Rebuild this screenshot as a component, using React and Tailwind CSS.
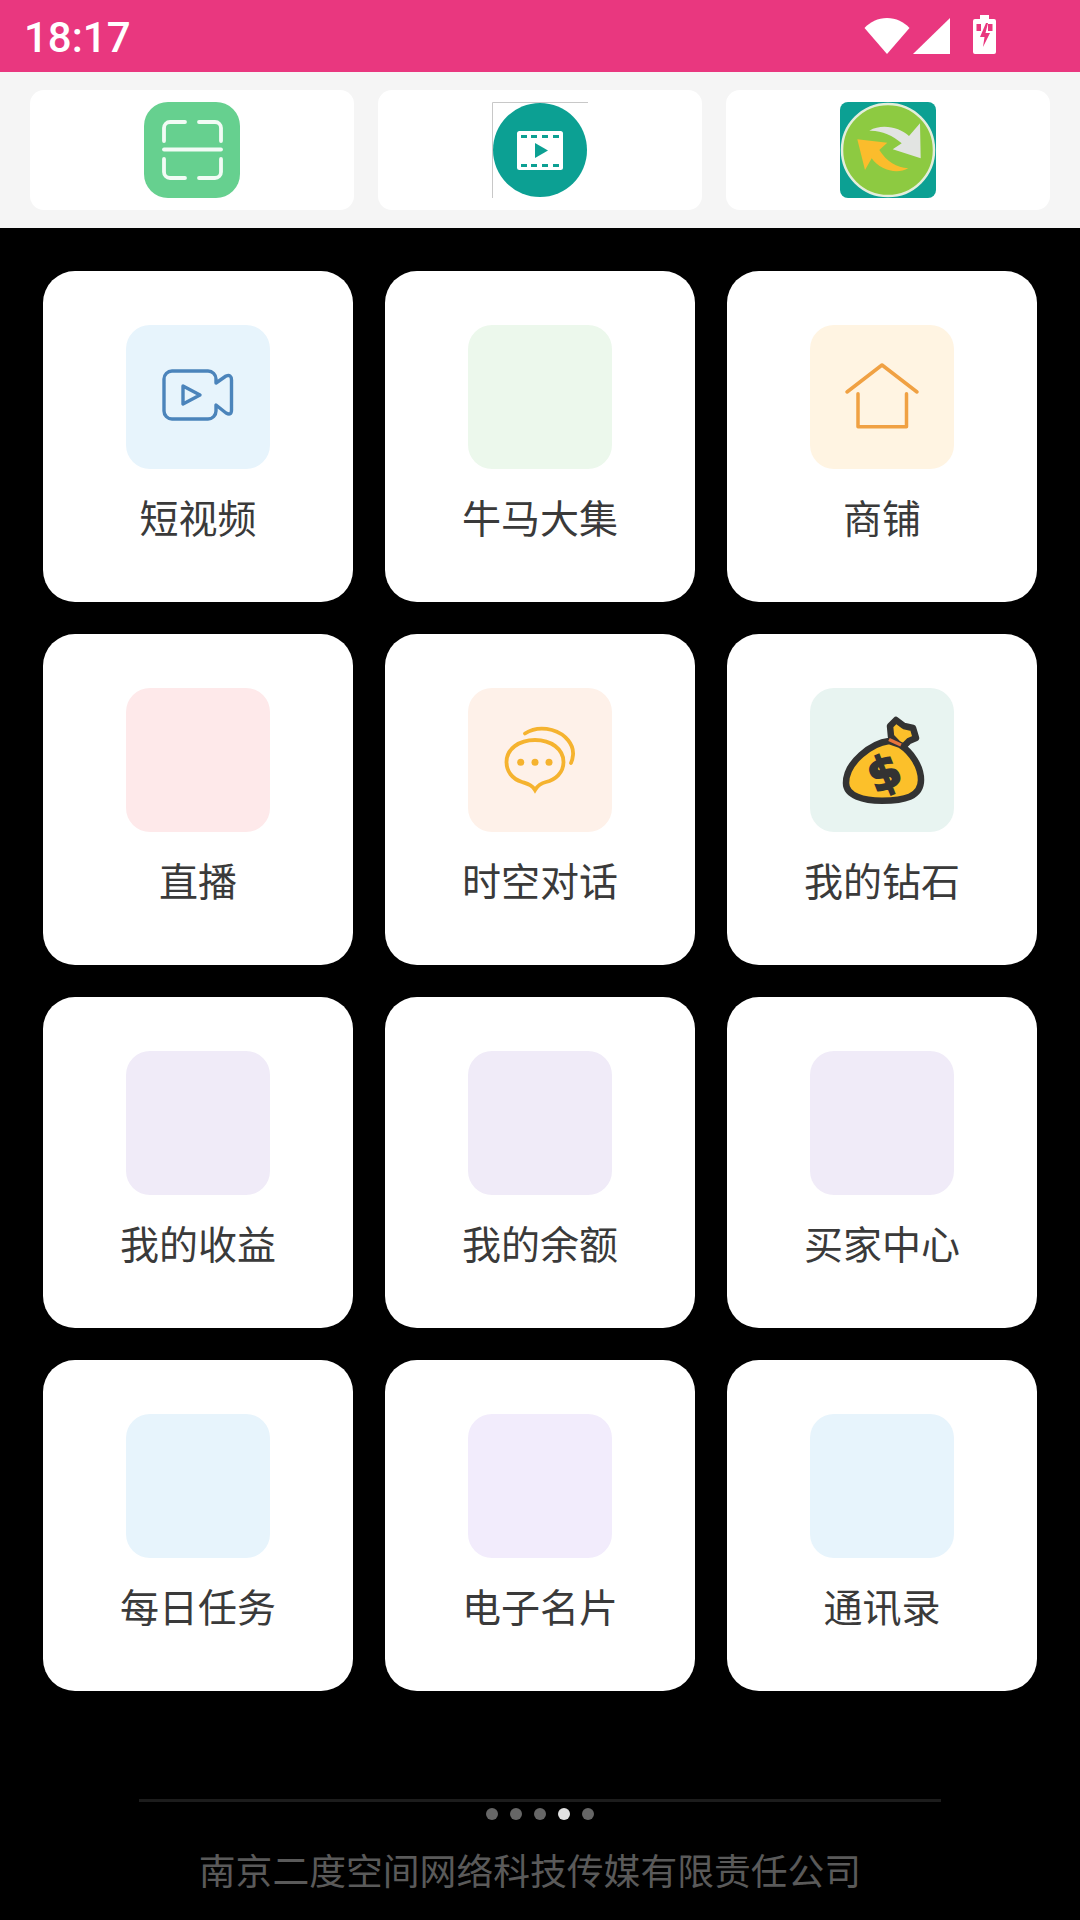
import React from "react";

const VideoIcon = () => (
  <svg width="144" height="144" viewBox="0 0 144 144" fill="none" stroke="#4b84bb" strokeWidth="3.4" strokeLinejoin="round">
    <path d="M46 46H82A8 8 0 0 1 90 54V58L100 51Q105.5 49 105.5 55V85Q105.5 91 100 88L90 80V86A8 8 0 0 1 82 94H46A8 8 0 0 1 38 86V54A8 8 0 0 1 46 46Z" />
    <path d="M57 61L74 70L57 79Z" />
  </svg>
);

const HouseIcon = () => (
  <svg width="144" height="144" viewBox="0 0 144 144" fill="none" stroke="#f0a143" strokeWidth="3.5" strokeLinecap="round" strokeLinejoin="round">
    <path d="M37 67L72 40L107 67" />
    <path d="M48 68.7V101.7H96.5V68.7" />
  </svg>
);

const ChatIcon = () => (
  <svg width="144" height="144" viewBox="0 0 144 144" fill="none" stroke="#f5b32f" strokeWidth="3.8" strokeLinecap="round">
    <path d="M67 102C64 97 60 96 54 94C44 91 38.5 83 38.5 74C38.5 61 51 52 67 52C83 52 95.5 61 95.5 74C95.5 85 87 92 78 94C73 95 70 97 67 102Z" />
    <path d="M57 45.5C64 41 74 39.5 84 42C98 46 106 57 105 67C104.7 70 104 73 103 75" />
    <g fill="#f5b32f" stroke="none">
      <circle cx="52.7" cy="74.3" r="3.5" />
      <circle cx="67" cy="74.3" r="3.5" />
      <circle cx="81" cy="74.3" r="3.5" />
    </g>
  </svg>
);

const BagIcon = () => (
  <svg width="144" height="144" viewBox="0 0 144 144" fill="none">
    <path d="M80 38L86 32L94 38L103 40L106 50L99 53L92 60L81 48.5Z" fill="#fcc02a" stroke="#333333" strokeWidth="6.5" strokeLinejoin="round" />
    <path d="M79 53C62 55 36 74 36 95C36 108 54 112.7 72 112.7C94 112.7 111 109 111 92C111 78 101 64 90.5 57Z" fill="#fcc02a" stroke="#333333" strokeWidth="6.5" strokeLinejoin="round" />
    <path d="M79 51.5L91 57" stroke="#e8743b" strokeWidth="3.5" />
    <text x="74" y="101" textAnchor="middle" fontSize="46" fontWeight="700" fill="#333333" stroke="#333333" strokeWidth="2" fontFamily="'DejaVu Sans', sans-serif" transform="rotate(-22 74 85)">$</text>
  </svg>
);

const rows = [
  { label: "短视频", bg: "bg-[#e7f4fc]", icon: <VideoIcon /> },
  { label: "牛马大集", bg: "bg-[#ecf8ec]" },
  { label: "商铺", bg: "bg-[#fff4e2]", icon: <HouseIcon /> },
  { label: "直播", bg: "bg-[#fee9ea]" },
  { label: "时空对话", bg: "bg-[#fef1e9]", icon: <ChatIcon /> },
  { label: "我的钻石", bg: "bg-[#e8f4f1]", icon: <BagIcon /> },
  { label: "我的收益", bg: "bg-[#f0ebf8]" },
  { label: "我的余额", bg: "bg-[#f0ebf8]" },
  { label: "买家中心", bg: "bg-[#f0ebf8]" },
  { label: "每日任务", bg: "bg-[#e7f4fc]" },
  { label: "电子名片", bg: "bg-[#f2ecfc]" },
  { label: "通讯录", bg: "bg-[#e7f4fc]" },
];

const ScanTile = () => (
  <svg width="96" height="96" viewBox="0 0 96 96" fill="none">
    <rect width="96" height="96" rx="24" fill="#66d08f" />
    <g stroke="#f2fbf5" strokeWidth="3.8" strokeLinecap="round" fill="none">
      <path d="M20 39V26A6 6 0 0 1 26 20H41" />
      <path d="M55 20H71A6 6 0 0 1 77 26V39" />
      <path d="M20 57V70A6 6 0 0 0 26 76H41" />
      <path d="M55 76H71A6 6 0 0 0 77 70V57" />
      <path d="M20 47.5H77" />
    </g>
  </svg>
);

const FilmTile = () => (
  <svg width="96" height="96" viewBox="0 0 96 96" fill="none">
    <path d="M0.5 96V0.5H96" stroke="#c8c8c8" strokeWidth="1" />
    <circle cx="48" cy="48" r="47" fill="#0ca093" />
    <rect x="25" y="29" width="46" height="39" rx="2.5" fill="#ffffff" />
    <g fill="#0ca093">
      <rect x="29" y="33" width="6" height="3" />
      <rect x="39" y="33" width="6" height="3" />
      <rect x="50" y="33" width="6" height="3" />
      <rect x="61" y="33" width="6" height="3" />
      <rect x="29" y="62" width="6" height="3" />
      <rect x="39" y="62" width="6" height="3" />
      <rect x="50" y="62" width="6" height="3" />
      <rect x="61" y="62" width="6" height="3" />
      <path d="M43 41L56 48.5L43 56Z" />
    </g>
  </svg>
);

const SwapTile = () => (
  <svg width="96" height="96" viewBox="0 0 96 96" fill="none">
    <rect width="96" height="96" rx="8" fill="#0ca093" />
    <circle cx="48" cy="48" r="46" fill="#8dca41" stroke="#e4eedc" strokeWidth="2.5" />
    <path d="M29.3 28.7C43 21 60 26 69 34L80 21.3L80.7 56.3L52.7 47.3L61.7 41.3C53 33 40 28 29.3 28.7Z" fill="#e2e4e2" />
    <path d="M17.3 37.3L47.3 40.7L39.3 48C46.7 59.7 56.7 65.3 68.3 66.3C56.7 73 40 68 31.7 56.3L25 68Z" fill="#fbbc2c" />
  </svg>
);

export default function App() {
  return (
    <div className="w-[1080px] h-[1920px] bg-black flex flex-col font-['Noto_Sans_CJK_SC','Noto_Sans',sans-serif]">
      <div className="h-[72px] bg-[#e9377f] flex items-center pl-[24px] pr-[84px]">
        <span className="font-['Roboto',sans-serif] font-medium text-[42px] leading-none text-white mt-[3px]">18:17</span>
        <div className="ml-auto flex items-start h-[40px] mb-[2px]">
          <svg width="46" height="38" viewBox="0 0 46 38" className="mt-[2px]" fill="#ffffff">
            <path d="M23 37L0.5 11C6 5 14 1 23 1C32 1 40 5 45.5 11Z" />
          </svg>
          <svg width="38" height="38" viewBox="0 0 38 38" className="mt-[2px] ml-[3px]" fill="#ffffff">
            <path d="M0 37L37 1V37Z" />
          </svg>
          <svg width="23" height="39" viewBox="0 0 23 39" className="ml-[22px]" fill="#ffffff">
            <path d="M7 0H16V4H21A2 2 0 0 1 23 6V37A2 2 0 0 1 21 39H2A2 2 0 0 1 0 37V6A2 2 0 0 1 2 4H7Z" />
            <path d="M3.5 9H8V16H3.5Z M15 9H19.5V16H15Z" fill="#e9377f" />
            <path d="M13 8L7 22H11.5L10 32L17 18H12.5L15 8Z" fill="#e9377f" />
          </svg>
        </div>
      </div>

      <div className="h-[156px] bg-[#f5f5f5] grid grid-cols-3 gap-x-[24px] px-[30px] pt-[18px] pb-[18px]">
        {[<ScanTile key="a" />, <FilmTile key="b" />, <SwapTile key="c" />].map((tile, i) => (
          <div key={i} className="bg-white rounded-[14px] flex items-center justify-center">
            {tile}
          </div>
        ))}
      </div>

      <div className="grid grid-cols-3 gap-x-[32px] gap-y-[32px] px-[43px] pt-[43px]">
        {rows.map((item) => (
          <div key={item.label} className="h-[331px] bg-white rounded-[32px] flex flex-col items-center pt-[54px]">
            <div className={`w-[144px] h-[144px] rounded-[24px] ${item.bg}`}>{item.icon}</div>
            <div className="mt-[22px] text-[39px] leading-[50px] text-[#3a3a3a]">{item.label}</div>
          </div>
        ))}
      </div>

      <div className="mt-[108px] mx-[139px] h-[3px] bg-[#1c1c1c]" />
      <div className="mt-[6px] flex justify-center gap-x-[12px]">
        {[0, 1, 2, 3, 4].map((i) => (
          <div key={i} className={`w-[12px] h-[12px] rounded-full ${i === 3 ? "bg-[#e0e0e0]" : "bg-[#666666]"}`} />
        ))}
      </div>
      <div className="mt-[24px] pr-[20px] text-center text-[36.8px] leading-[50px] text-[#5a5a5a]">南京二度空间网络科技传媒有限责任公司</div>
    </div>
  );
}
